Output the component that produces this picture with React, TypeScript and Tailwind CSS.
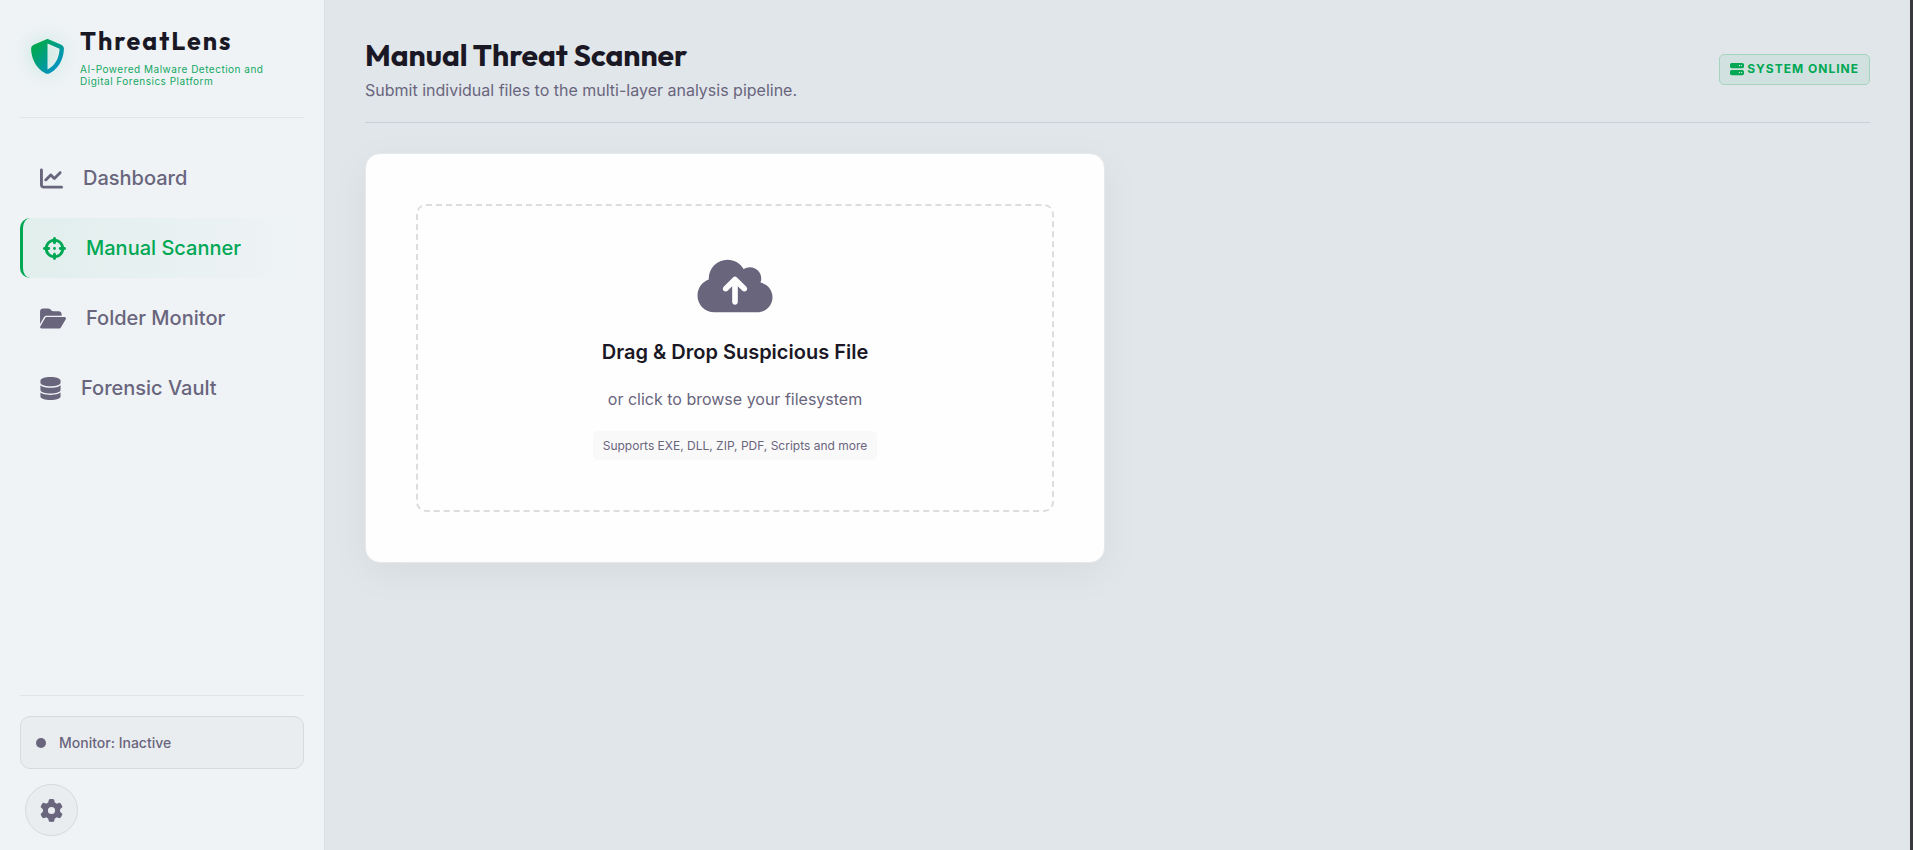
import type { IconType } from "react-icons";
import {
  FaChartLine,
  FaCloudArrowUp,
  FaCrosshairs,
  FaDatabase,
  FaFolderOpen,
  FaGear,
  FaServer,
  FaShieldHalved,
} from "react-icons/fa6";

type NavEntry = {
  label: string;
  icon: IconType;
  iconWidth: string;
  active?: boolean;
};

const navEntries: NavEntry[] = [
  { label: "Dashboard", icon: FaChartLine, iconWidth: "w-[23px]" },
  { label: "Manual Scanner", icon: FaCrosshairs, iconWidth: "w-[23px]", active: true },
  { label: "Folder Monitor", icon: FaFolderOpen, iconWidth: "w-[26px]" },
  { label: "Forensic Vault", icon: FaDatabase, iconWidth: "w-[21px]" },
];

function Brand() {
  return (
    <div className="flex items-center gap-[15px] border-b border-[#e0e4e7] pt-[25px] pr-2 pb-[30px] pl-[10px]">
      <svg className="absolute size-0" aria-hidden="true">
        <defs>
          <linearGradient id="brand" x1="0" y1="0" x2="1" y2="1">
            <stop offset="0.2" stopColor="#00a854" />
            <stop offset="0.8" stopColor="#0093c0" />
          </linearGradient>
        </defs>
      </svg>
      <FaShieldHalved
        fill="url(#brand)"
        className="size-[35px] shrink-0 drop-shadow-[0_0_10px_rgba(0,168,84,0.2)]"
      />
      <div>
        <div className="font-['Outfit','Lato',sans-serif] text-[25px] leading-[32px] font-bold tracking-[2px] text-[#1a1825]">
          ThreatLens
        </div>
        <p className="mt-[6px] text-[10px] leading-[12px] tracking-wider text-[#12a862]">
          AI-Powered Malware Detection and Digital Forensics Platform
        </p>
      </div>
    </div>
  );
}

function NavLink({ label, icon: Icon, iconWidth, active }: NavEntry) {
  const state = active
    ? "border-l-[3px] border-[#00a854] bg-linear-to-r from-[#00a854]/6 to-transparent text-[#00a854]"
    : "text-[#69657d]";
  return (
    <a
      href="#"
      aria-current={active ? "page" : undefined}
      className={`flex h-[60px] items-center gap-5 rounded-[10px] px-5 text-[20px] font-medium ${state}`}
    >
      <Icon className={`h-[23px] ${iconWidth}`} />
      {label}
    </a>
  );
}

function Sidebar() {
  return (
    <aside className="flex w-[325px] shrink-0 flex-col border-r border-[#dbdfe3] bg-[#eff3f6] px-5">
      <Brand />
      <nav className="mt-[30px] flex flex-col gap-[10px]">
        {navEntries.map((entry) => (
          <NavLink key={entry.label} {...entry} />
        ))}
      </nav>
      <div className="mt-auto border-t border-[#e0e4e7] pt-5 pb-[14px]">
        <div className="flex h-[53px] items-center gap-[13px] rounded-[10px] border border-[#d6dadd] bg-[#eaedf0] px-[15px] text-[14px] font-medium text-[#69657d]">
          <span className="size-[10px] rounded-full bg-[#69657d]" />
          Monitor: Inactive
        </div>
        <button
          type="button"
          aria-label="Settings"
          className="mt-[15px] ml-[5px] flex h-[52px] w-[53px] items-center justify-center rounded-full border border-[#d6dadd] bg-[#eaedf0] text-[#69657d]"
        >
          <FaGear className="size-[23px]" />
        </button>
      </div>
    </aside>
  );
}

function DropZone() {
  return (
    <section className="rounded-[15px] border border-[#e6e8ea] bg-[#fefefe] p-[50px] shadow-[0_10px_40px_rgba(0,0,0,0.05)]">
      <button
        type="button"
        className="flex w-full flex-col items-center rounded-[10px] border-2 border-dashed border-[#dddddd] pt-[50px] pb-[50px]"
      >
        <FaCloudArrowUp className="h-[60px] w-[76px] text-[#69657d]" />
        <span className="mt-5 text-[20px] leading-[32px] font-semibold text-[#1a1825]">
          Drag &amp; Drop Suspicious File
        </span>
        <span className="mt-[18px] text-[16px] leading-[26px] text-[#69657d]">
          or click to browse your filesystem
        </span>
        <span className="mt-[19px] rounded-[5px] bg-[#f9f9f9] px-[10px] py-[5px] text-[12px] leading-[19px] text-[#69657d]">
          Supports EXE, DLL, ZIP, PDF, Scripts and more
        </span>
      </button>
    </section>
  );
}

export default function App() {
  return (
    <div className="flex min-h-screen border-r-[3px] border-[#37393d] bg-[#e1e6ea] font-['Inter','Liberation_Sans',sans-serif]">
      <Sidebar />
      <main className="min-w-0 flex-1 p-10 pt-[35px]">
        <header className="flex items-center justify-between border-b border-[#cacfd5] pb-[19px]">
          <div>
            <h1 className="font-['Outfit','Lato',sans-serif] text-[30px] leading-[41px] font-bold text-[#1a1825]">
              Manual Threat Scanner
            </h1>
            <p className="mt-[1px] text-[16px] leading-[26px] text-[#69657d]">
              Submit individual files to the multi-layer analysis pipeline.
            </p>
          </div>
          <div className="flex h-[31px] items-center gap-[3px] rounded-[5px] border border-[#a4d4bc] bg-[#d1e1df] px-[10px] text-[12px] font-bold tracking-[1px] text-[#00a854]">
            <FaServer className="size-[14px]" />
            SYSTEM ONLINE
          </div>
        </header>
        <div className="mt-[30px] grid grid-cols-2 gap-[25px]">
          <DropZone />
        </div>
      </main>
    </div>
  );
}
